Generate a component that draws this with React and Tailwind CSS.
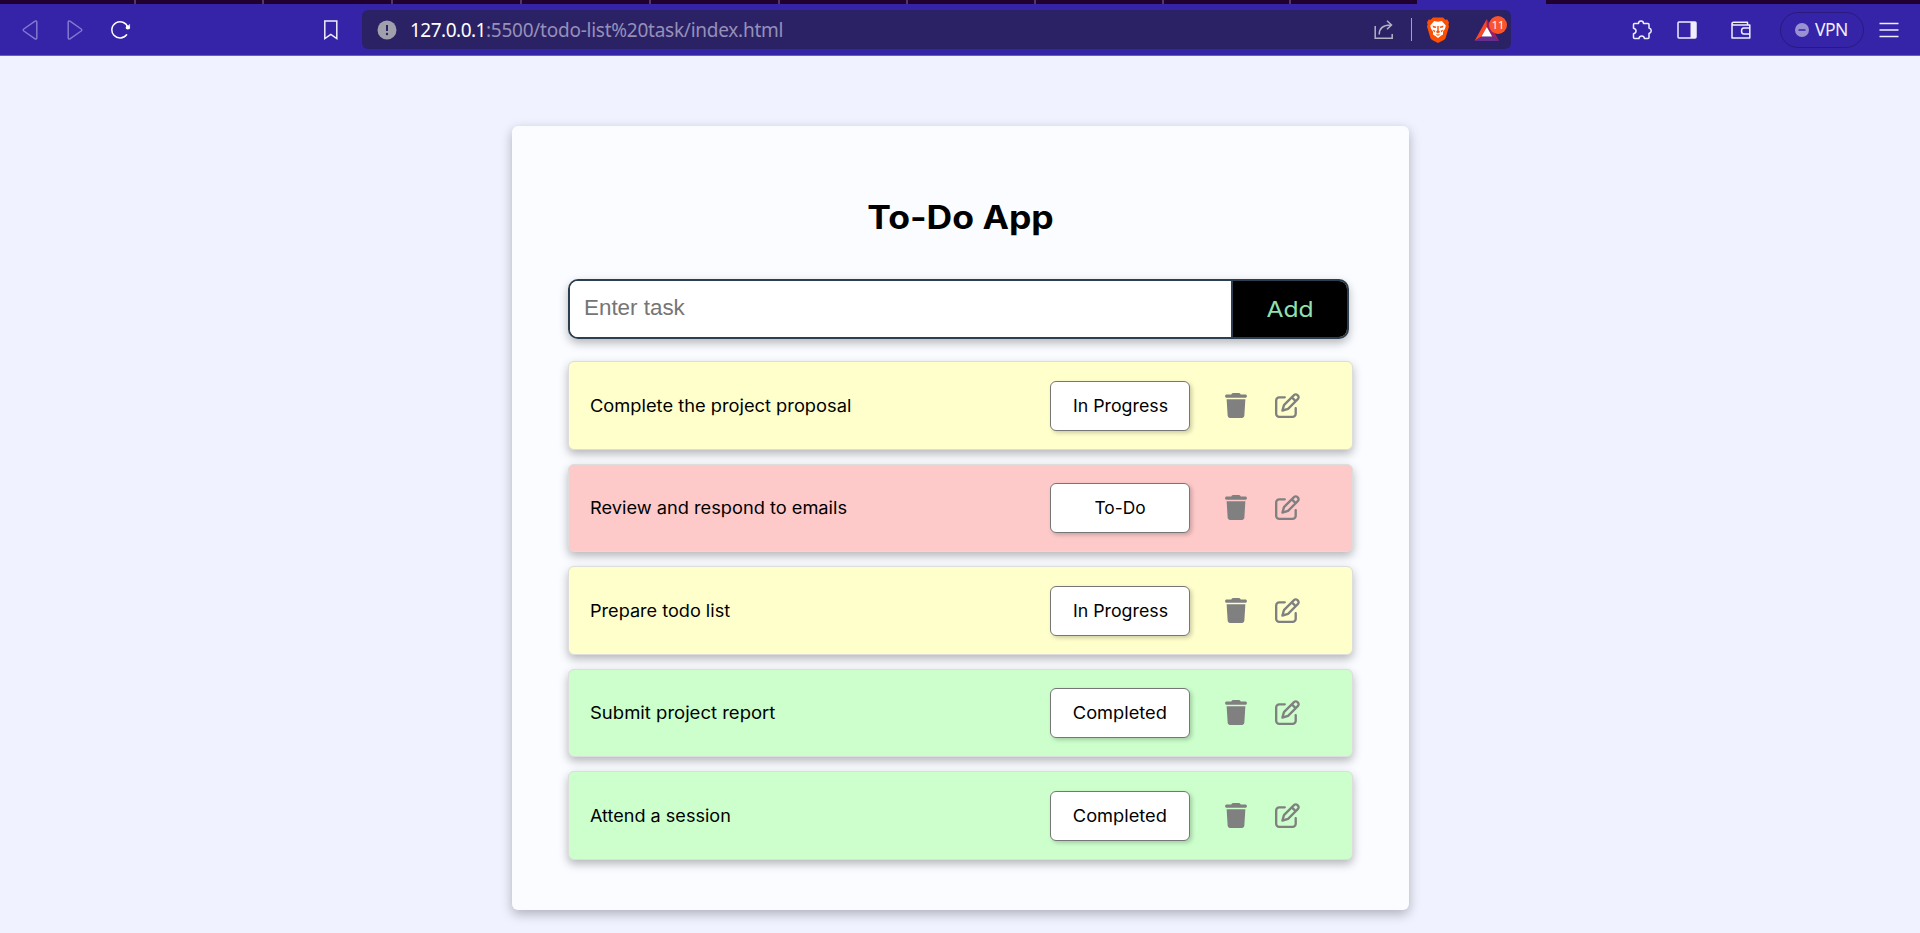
import { FaTrash, FaRegPenToSquare } from "react-icons/fa6";

const tasks = [
  { title: "Complete the project proposal", status: "In Progress", color: "bg-[#ffffcc]", stretch: "scale-x-[1.075]", statusStretch: "scale-x-[1.045]" },
  { title: "Review and respond to emails", status: "To-Do", color: "bg-[#fec9c9]", stretch: "scale-x-[1.072]", statusStretch: "scale-x-[1.02]" },
  { title: "Prepare todo list", status: "In Progress", color: "bg-[#ffffcc]", stretch: "scale-x-[1.065]", statusStretch: "scale-x-[1.045]" },
  { title: "Submit project report", status: "Completed", color: "bg-[#ccffcc]", stretch: "scale-x-[1.088]", statusStretch: "scale-x-[1.073]" },
  { title: "Attend a session", status: "Completed", color: "bg-[#ccffcc]", stretch: "scale-x-[1.062]", statusStretch: "scale-x-[1.073]" },
];

const tabWidths = ["w-[134px]", "w-[126px]", "w-[127px]", "w-[127px]", "w-[127px]", "w-[127px]", "w-[126px]", "w-[126px]", "w-[126px]", "w-[125px]"];

function TabStrip() {
  return (
    <div className="flex h-1 bg-[#1f002e]">
      {tabWidths.map((w, i) => (
        <div key={i} className="flex">
          <div className={w} />
          <div className="w-[2px] bg-[#553561]" />
        </div>
      ))}
      <div className="w-[126px]" />
      <div className="w-[129px] bg-[#3523a8]" />
    </div>
  );
}

function BraveIcon() {
  return (
    <svg viewBox="0 0 24 26" className="h-[26px] w-6">
      <path d="M7 0.500h10l2.300 2.200 2-.2 1.700 3-.6 2 .6 2-3.300 11.200c-.3 1-1 1.700-1.800 2.300L12 26l-5.900-3c-.8-.6-1.500-1.300-1.800-2.300L1 9.500l.6-2-.6-2 1.700-3 2 .2z" fill="#fb5004" />
      <path d="M12 4.800l3.800-.8 4 4.400-.8 3.400-2 2.600v3l-2.400 1.600L12 21l-2.600-2L7 17.400v-3l-2-2.600-.8-3.400 4-4.400z" fill="#fff" />
      <path d="M6.500 8.600l4 1.200-.8 1.200-2.600-.6zM17.500 8.600l-4 1.200.8 1.200 2.600-.6zM11.300 9h1.400v4.600l1.500 1.400-2.200 1.200L9.800 15l1.500-1.400zM6.600 12.400l2.800 1.400-1 1.800zM17.400 12.400l-2.800 1.400 1 1.800z" fill="#fb5004" />
      <path d="M9.500 17.600l2.500-.8 2.500.8-2.500 1.600z" fill="#fb5004" opacity=".6" />
    </svg>
  );
}

function Toolbar() {
  return (
    <div className="flex h-[52px] items-center border-b border-[#6a5cc4] bg-[#3523a8] font-['Noto_Sans',sans-serif]">
      <div className="flex w-[362px] items-center">
        <svg viewBox="0 0 16 20" className="ml-[22px] h-5 w-4 fill-none stroke-[#8478cf]" strokeWidth="1.500" strokeLinejoin="round">
          <path d="M14.800 2v16c0 1-1 1.400-1.800.8L1.800 11c-.8-.6-.8-1.400 0-2L13 1.200c.8-.6 1.800-.2 1.800.8z" />
        </svg>
        <svg viewBox="0 0 16 20" className="ml-[29px] h-5 w-4 fill-none stroke-[#8478cf]" strokeWidth="1.500" strokeLinejoin="round">
          <path d="M1.200 2v16c0 1 1 1.400 1.800.8L14.200 11c.8-.6.8-1.400 0-2L3 1.200C2.200.6 1.200 1 1.200 2z" />
        </svg>
        <svg viewBox="0 0 20 20" className="ml-[28px] h-5 w-5 fill-none stroke-white" strokeWidth="1.500" strokeLinecap="round">
          <path d="M15.600 14.800a8.200 8.200 0 1 1 1.200-7.600" />
          <circle cx="16.800" cy="7.400" r="2" fill="#fff" stroke="none" />
          <path d="M18.600 4.600v4h-3.200z" fill="#fff" strokeWidth=".5" />
        </svg>
        <svg viewBox="0 0 16 20" className="ml-[192px] h-5 w-4 fill-none stroke-[#f0eefc]" strokeWidth="1.500">
          <path d="M1.800 1h12v17.500l-6-4.200-6 4.200z" />
        </svg>
      </div>
      <div className="flex h-[39px] w-[1149px] items-center rounded-md bg-[#2b2265]">
        <svg viewBox="0 0 20 20" className="ml-[15px] h-5 w-5">
          <circle cx="10" cy="10" r="9.500" fill="#a0a0ac" />
          <path d="M10 5v6" stroke="#2b2265" strokeWidth="2" />
          <circle cx="10" cy="14" r="1.200" fill="#2b2265" />
        </svg>
        <div className="ml-[13px] flex h-full w-[961px] items-center whitespace-nowrap pt-[2px] text-[19px] leading-none">
          <span className="tracking-[-0.5px] text-white">127.0.0.1</span>
          <span className="tracking-[-0.25px] text-[#9690b8]">:5500/todo-list%20task/index.html</span>
        </div>
        <svg viewBox="0 0 20 20" className="ml-[3px] h-5 w-5 fill-none stroke-[#b4b1c4]" strokeWidth="1.500">
          <path d="M1.200 6v12.300h17V14" />
          <path d="M5.200 14.500c0-5.500 3-9.500 11.500-9.500M13 .8L17.500 5 13 9.200" />
        </svg>
        <div className="ml-[17px] h-[23px] w-px bg-[#a5a1bd]" />
        <div className="ml-[14px] flex"><BraveIcon /></div>
        <div className="relative ml-6 flex">
          <svg viewBox="0 0 26 24" className="h-6 w-[26px]">
            <path d="M12.800 1L.5 23l7-4.600 5.300-9.400z" fill="#ff4724" />
            <path d="M12.800 1l12.400 22-7-4.600-5.400-9.400z" fill="#9e1f63" />
            <path d="M.5 23l7-4.600h10.700l7 4.600z" fill="#662d91" />
            <path d="M12.800 9l5.400 9.400H7.500z" fill="#fff" />
          </svg>
          <span className="absolute -top-[2px] left-[15px] flex h-[18px] w-[18px] items-center justify-center rounded-full bg-[#fb542b] text-[11px] leading-none text-white">11</span>
        </div>
      </div>
      <div className="flex flex-1 items-center text-[#f0eefc]">
        <svg viewBox="0 0 20 20" className="ml-[121px] h-5 w-5 fill-none stroke-current" strokeWidth="1.500" strokeLinejoin="round">
          <path d="M2.500 3.500h4c0-3.500 5-3.500 5 0h4.500c.6 0 1 .4 1 1v3.500c3 1 3 4.500 0 5.500v4c0 .6-.4 1-1 1h-3.500c-.6-3.400-5-3.400-5.600 0H2.500c-.6 0-1-.4-1-1v-3.700c3.400-.6 3.400-5 0-5.600V4.500c0-.6.400-1 1-1z" />
        </svg>
        <svg viewBox="0 0 20 18" className="ml-[25px] h-[18px] w-5">
          <rect x="1" y="1" width="18" height="16" rx="1" fill="none" stroke="currentColor" strokeWidth="1.500" />
          <path d="M13.500 1H19v16h-5.500z" fill="currentColor" />
        </svg>
        <svg viewBox="0 0 20 18" className="ml-[34px] h-[18px] w-5 fill-none stroke-current" strokeWidth="1.500" strokeLinejoin="round">
          <path d="M16.500 4V1.200H2.500C.5 1.200.5 4 2.500 4h16.300v13H1V2.500M18.800 7h-6c-3 0-3 6 0 6h6" />
        </svg>
        <div className="ml-[29px] flex h-9 w-[84px] items-center rounded-full border border-[#281b7d]">
          <svg viewBox="0 0 14 14" className="ml-[14px] h-[14px] w-[14px]">
            <circle cx="7" cy="7" r="7" fill="#9a91d3" />
            <path d="M3.500 7h7" stroke="#3523a8" strokeWidth="1.500" />
          </svg>
          <span className="ml-[6px] text-[17.500px] leading-none tracking-[-0.5px]">VPN</span>
        </div>
        <svg viewBox="0 0 20 16" className="ml-[15px] h-4 w-5 stroke-current" strokeWidth="1.500">
          <path d="M.5 1.500h19M.5 8h19M.5 14.500h19" />
        </svg>
      </div>
    </div>
  );
}

function Task({ title, status, color, stretch, statusStretch }) {
  return (
    <li className={`flex h-[88.5px] items-center rounded-[6px] border border-[#dddddd] pl-[21px] pr-[52px] shadow-[0_4px_10px_rgba(0,0,0,0.28)] ${color}`}>
      <span className={`flex-1 origin-left whitespace-nowrap pt-[2px] text-[17px] ${stretch}`}>{title}</span>
      <button className="mt-px h-[50px] w-[140px] rounded-[6px] border border-[#767676] bg-white text-[17px] shadow-[2px_2px_4px_rgba(0,0,0,0.2)]">
        <span className={`inline-block pt-px ${statusStretch}`}>{status}</span>
      </button>
      <FaTrash className="ml-[35px] h-[25px] w-[22px] text-[#808080]" />
      <FaRegPenToSquare className="ml-7 h-[25px] w-[25px] text-[#808080]" />
    </li>
  );
}

export default function App() {
  return (
    <div className="flex h-[933px] w-[1920px] flex-col overflow-hidden bg-[#f0f2ff] font-['Inter',sans-serif] text-black">
      <TabStrip />
      <Toolbar />
      <main className="ml-[512px] mt-[70px] h-[784px] w-[897px] rounded-[6px] bg-[#fbfcff] pl-14 shadow-[0_4px_12px_rgba(0,0,0,0.28)]">
        <h1 className="w-[785px] scale-x-[1.11] pt-[68px] text-center text-[32px] font-bold leading-[48px]">To-Do App</h1>
        <form className="mt-[37px] flex h-[60px] w-[781px] overflow-hidden rounded-[10px] border-2 border-[#2c3e50] bg-white shadow-[0_4px_10px_rgba(0,0,0,0.28)]">
          <input placeholder="Enter task" className="w-[661px] bg-white pb-[2px] pl-[14px] font-['Liberation_Sans',sans-serif] text-[22.400px] outline-none placeholder:text-[#757575]" />
          <button type="button" className="flex-1 border-l-2 border-[#2c3e50] bg-black text-[22px] text-[#90e0b0]">
            <span className="inline-block scale-x-[1.12]">Add</span>
          </button>
        </form>
        <ul className="flex w-[785px] flex-col gap-[14px] pt-[22.200px]">
          {tasks.map((t) => (
            <Task key={t.title} {...t} />
          ))}
        </ul>
      </main>
    </div>
  );
}
